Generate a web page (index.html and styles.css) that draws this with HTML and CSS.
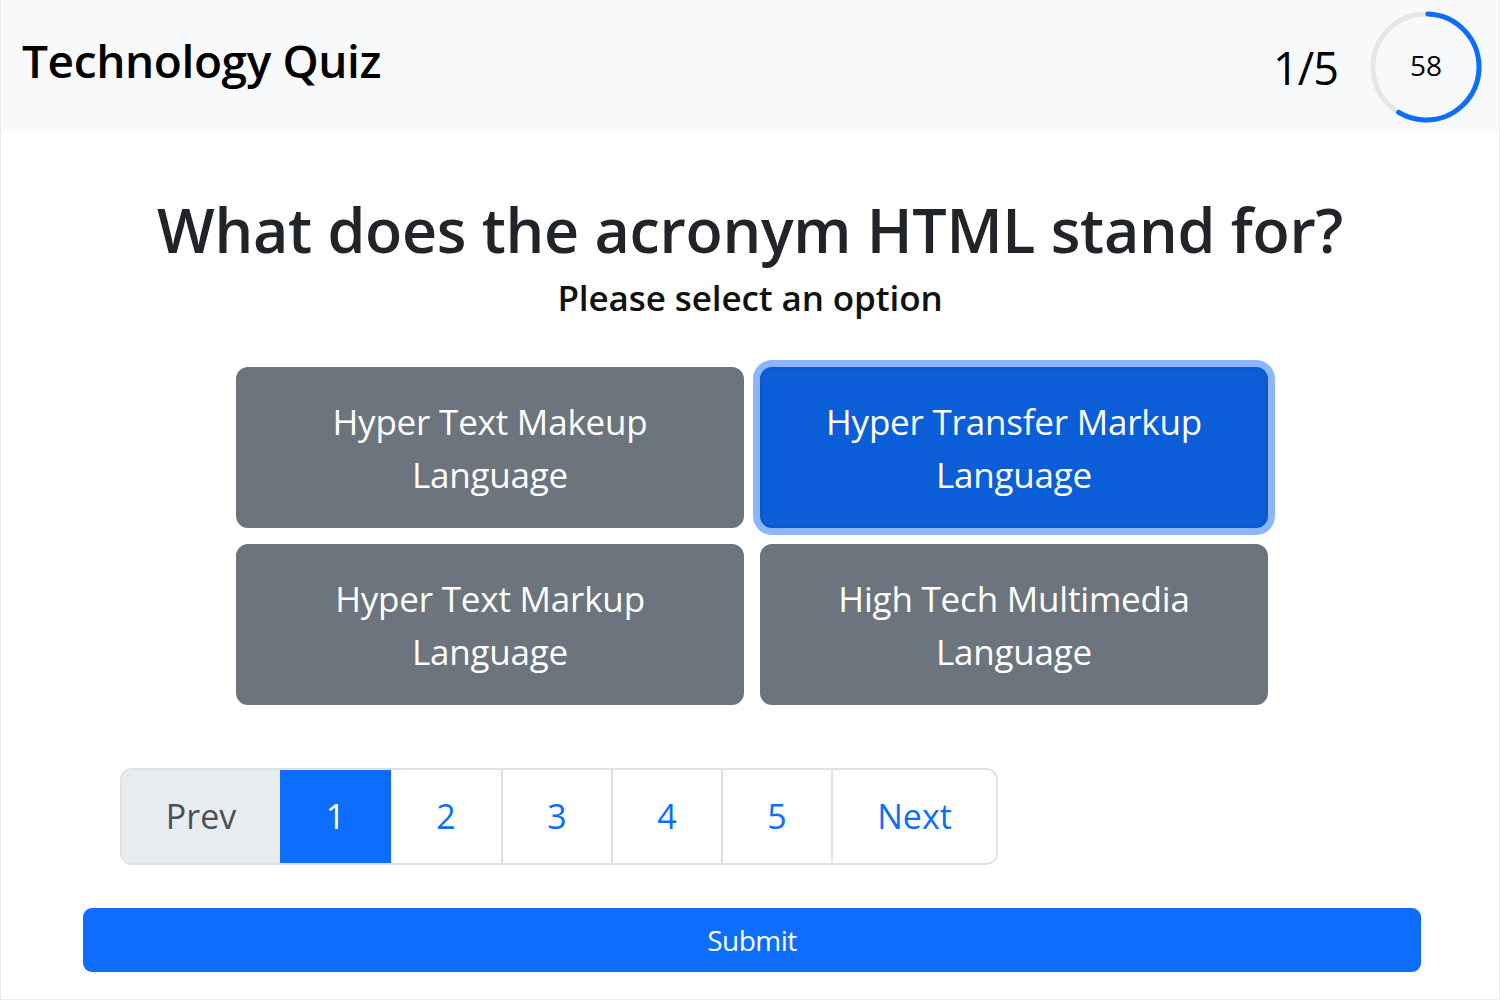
FILE: index.html
```html
<!DOCTYPE html>
<html lang="en">
<head>
<meta charset="utf-8">
<title>Technology Quiz</title>
<link rel="stylesheet" href="styles.css">
</head>
<body>
<div class="page">
  <header class="topbar">
    <div class="brand">Technology Quiz</div>
    <div class="status">
      <div class="count">1/5</div>
      <div class="timer">
        <svg class="timer-ring" width="112" height="112" viewBox="0 0 112 112">
          <circle cx="56" cy="56" r="53" fill="none" stroke="#e6e6e6" stroke-width="5"/>
          <circle cx="56" cy="56" r="53" fill="none" stroke="#0d6efd" stroke-width="5" stroke-linecap="round"
            stroke-dasharray="193.1 333.0" transform="rotate(-88 56 56)"/>
        </svg>
        <span class="timer-value">58</span>
      </div>
    </div>
  </header>

  <main class="content">
    <h2 class="question">What does the acronym HTML stand for?</h2>
    <p class="hint">Please select an option</p>

    <div class="options">
      <button class="opt">Hyper Text Makeup<br>Language</button>
      <button class="opt opt-active">Hyper Transfer Markup<br>Language</button>
      <button class="opt">Hyper Text Markup<br>Language</button>
      <button class="opt">High Tech Multimedia<br>Language</button>
    </div>

    <div class="bottom">
      <nav class="pager">
        <span class="pg pg-prev">Prev</span>
        <span class="pg pg-num pg-current">1</span>
        <span class="pg pg-num">2</span>
        <span class="pg pg-num">3</span>
        <span class="pg pg-num">4</span>
        <span class="pg pg-num">5</span>
        <span class="pg pg-next">Next</span>
      </nav>
      <button class="submit">Submit</button>
    </div>
  </main>
</div>
</body>
</html>
```

FILE: styles.css
```css
* { box-sizing: border-box; }
html, body { margin: 0; padding: 0; background: #fff; }
body {
  font-family: "Open Sans", "Noto Sans", "Liberation Sans", sans-serif;
  color: #212529;
}
.page {
  width: 1500px;
  height: 1000px;
  border: 1px solid #e9ecef;
  border-top: none;
  overflow: hidden;
}
.topbar {
  height: 132px;
  background: #f8f9fa;
  display: flex;
  align-items: center;
  justify-content: space-between;
  padding: 0 17px 0 21px;
}
.brand {
  font-size: 46px;
  font-weight: 600;
  color: #000;
  letter-spacing: -0.4px;
  margin-top: -12px;
}
.status {
  display: flex;
  align-items: center;
  gap: 32px;
}
.count {
  font-size: 45px;
  font-weight: 500;
  color: #000;
  letter-spacing: -1px;
  margin-top: 2px;
}
.timer {
  position: relative;
  width: 112px;
  height: 112px;
  margin-top: 2px;
}
.timer-ring { display: block; }
.timer-value {
  position: absolute;
  inset: 0;
  display: flex;
  align-items: center;
  justify-content: center;
  font-size: 28px;
  color: #000;
  padding-bottom: 4px;
}
.content {
  display: flex;
  flex-direction: column;
  align-items: center;
}
.question {
  margin: 58px 0 0;
  font-size: 61px;
  font-weight: 600;
  line-height: 80px;
  letter-spacing: -0.3px;
  color: #212529;
}
.hint {
  margin: 2px 0 0;
  font-size: 35px;
  font-weight: 600;
  line-height: 52px;
  letter-spacing: -0.1px;
  color: #111;
}
.options {
  margin-top: 43px;
  display: grid;
  grid-template-columns: 508px 508px;
  gap: 16px;
  margin-left: 4px;
}
.opt {
  height: 161px;
  border: 2px solid #6c757d;
  border-radius: 12px;
  background: #6c757d;
  color: #fff;
  font-family: inherit;
  font-size: 35px;
  line-height: 53px;
  padding: 0 20px 0;
  letter-spacing: -0.2px;
}
.opt-active {
  background: #0b5ed7;
  border-color: #0a58ca;
  box-shadow: 0 0 0 7px #8bb6f9;
}
.bottom {
  width: 1338px;
  margin-top: 63px;
  margin-left: 4px;
  display: flex;
  flex-direction: column;
}
.pager {
  margin-left: 37px;
  display: flex;
  width: 878px;
  height: 97px;
  border: 2px solid #dee2e6;
  border-radius: 12px;
  overflow: hidden;
}
.pg {
  display: flex;
  align-items: center;
  justify-content: center;
  font-size: 34px;
  color: #0d6efd;
  background: #fff;
  border-left: 2px solid #dee2e6;
  padding-bottom: 2px;
}
.pg-prev {
  width: 158px;
  border-left: none;
  background: #e9ecef;
  color: #495057;
}
.pg-num { width: 110px; }
.pg-current {
  background: #0d6efd;
  color: #fff;
  border-left: none;
  width: 111px;
}
.pg-current + .pg { border-left: none; }
.pg-next { flex: 1; }
.submit {
  margin-top: 43px;
  height: 64px;
  width: 1338px;
  border: none;
  border-radius: 9px;
  background: #0d6efd;
  color: #fff;
  font-family: inherit;
  font-size: 28px;
  letter-spacing: -0.5px;
}
```
